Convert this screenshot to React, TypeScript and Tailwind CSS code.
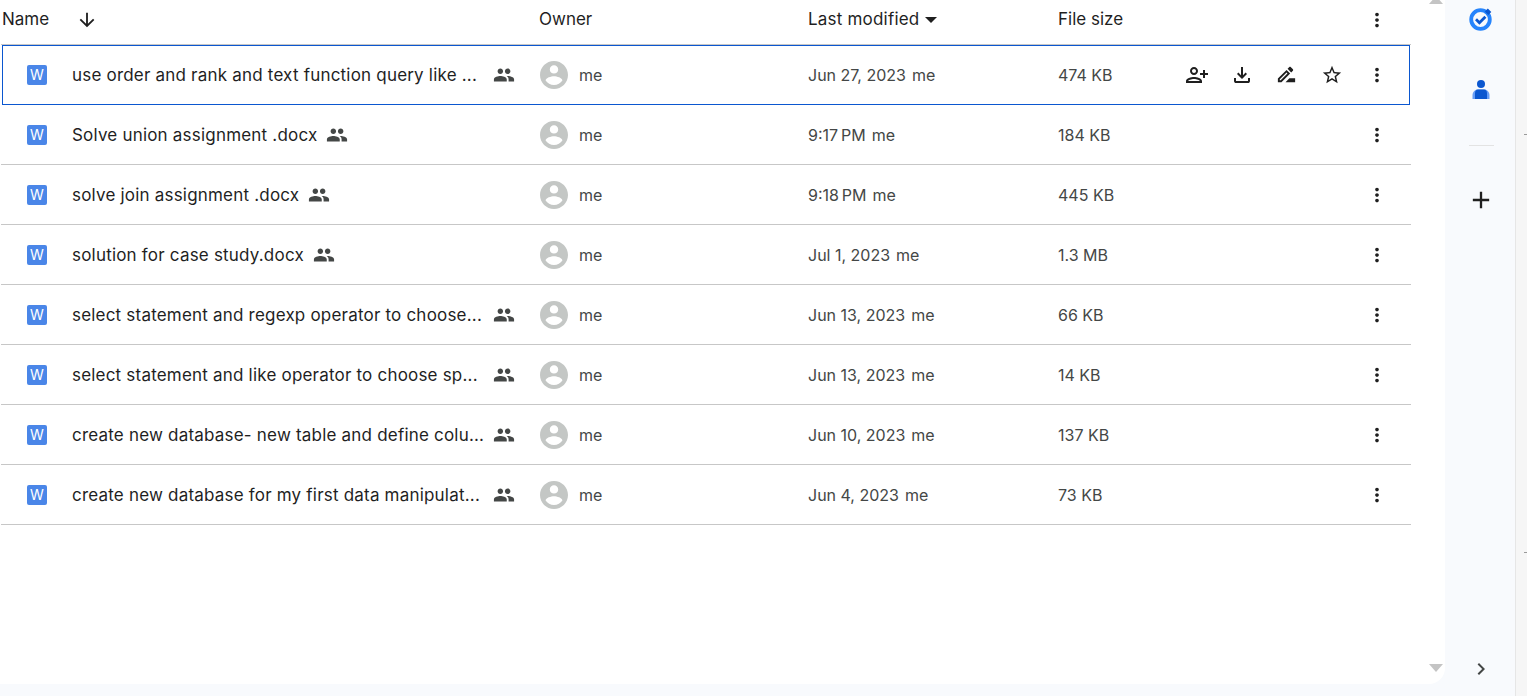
import React from "react";

const files = [
  { name: "use order and rank and text function query like ...", date: "Jun 27, 2023", size: "474 KB", active: true },
  { name: "Solve union assignment .docx", date: "9:17\u202fPM", size: "184 KB" },
  { name: "solve join assignment .docx", date: "9:18\u202fPM", size: "445 KB" },
  { name: "solution for case study.docx", date: "Jul 1, 2023", size: "1.3 MB" },
  { name: "select statement and regexp operator to choose...", date: "Jun 13, 2023", size: "66 KB" },
  { name: "select statement and like operator to choose sp...", date: "Jun 13, 2023", size: "14 KB" },
  { name: "create new database- new table and define colu...", date: "Jun 10, 2023", size: "137 KB" },
  { name: "create new database for my first data manipulat...", date: "Jun 4, 2023", size: "73 KB" },
];

function Icon({ d, className }: { d: string; className?: string }) {
  return (
    <svg viewBox="0 0 24 24" fill="currentColor" className={className}>
      <path d={d} />
    </svg>
  );
}

const moreVert =
  "M12 8c1.1 0 2-.9 2-2s-.9-2-2-2-2 .9-2 2 .9 2 2 2zm0 2c-1.1 0-2 .9-2 2s.9 2 2 2 2-.9 2-2-.9-2-2-2zm0 6c-1.1 0-2 .9-2 2s.9 2 2 2 2-.9 2-2-.9-2-2-2z";
const people =
  "M16 11c1.66 0 2.99-1.34 2.99-3S17.66 5 16 5c-1.66 0-3 1.34-3 3s1.34 3 3 3zm-8 0c1.66 0 2.99-1.34 2.99-3S9.66 5 8 5C6.34 5 5 6.34 5 8s1.34 3 3 3zm0 2c-2.33 0-7 1.17-7 3.5V19h14v-2.5c0-2.33-4.67-3.5-7-3.5zm8 0c-.29 0-.62.02-.97.05 1.16.84 1.97 1.97 1.97 3.45V19h6v-2.5c0-2.33-4.67-3.5-7-3.5z";
const personAdd =
  "M15 12c2.21 0 4-1.79 4-4s-1.79-4-4-4-4 1.79-4 4 1.79 4 4 4zm0-6c1.1 0 2 .9 2 2s-.9 2-2 2-2-.9-2-2 .9-2 2-2zm0 8c-2.67 0-8 1.34-8 4v2h16v-2c0-2.66-5.33-4-8-4zm-6 4c.22-.72 3.31-2 6-2 2.7 0 5.8 1.29 6 2H9zm-3-3v-3h3v-2H6V7H4v3H1v2h3v3h2z";
const download =
  "M12 16l-5-5 1.4-1.45 2.6 2.6V4h2v8.15l2.6-2.6L17 11l-5 5zm-6 4c-.55 0-1.02-.2-1.41-.59C4.2 19.02 4 18.55 4 18v-3h2v3h12v-3h2v3c0 .55-.2 1.02-.59 1.41-.39.39-.86.59-1.41.59H6z";
const rename =
  "M15 16l-4 4h10v-4h-6z M12.06 7.19L3 16.25V20h3.75l9.06-9.06-3.75-3.75z M5.92 18H5v-.92l7.06-7.06.92.92L5.92 18z M18.71 8.04c.39-.39.39-1.02 0-1.41l-2.34-2.34c-.39-.39-1.02-.39-1.41 0l-1.83 1.83 3.75 3.75 1.83-1.83z";
const star =
  "M22 9.24l-7.19-.62L12 2 9.19 8.63 2 9.24l5.46 4.73L5.82 21 12 17.27 18.18 21l-1.63-7.03L22 9.24zM12 15.4l-3.76 2.27 1-4.28-3.32-2.88 4.38-.38L12 6.1l1.71 4.04 4.38.38-3.32 2.88 1 4.28L12 15.4z";

function Avatar() {
  return (
    <svg viewBox="2 2 20 20" fill="#c4c7c5" className="w-7 h-7 shrink-0">
      <path d="M12 2C6.48 2 2 6.48 2 12s4.48 10 10 10 10-4.48 10-10S17.52 2 12 2zm0 3c1.66 0 3 1.34 3 3s-1.34 3-3 3-3-1.34-3-3 1.34-3 3-3zm0 14.2c-2.5 0-4.71-1.28-6-3.22.03-1.99 4-3.08 6-3.08 1.99 0 5.97 1.09 6 3.08-1.29 1.94-3.5 3.22-6 3.22z" />
    </svg>
  );
}

function ActionButton({ children }: { children: React.ReactNode }) {
  return <div className="flex items-center justify-center w-[45px] h-10">{children}</div>;
}

function FileRow({ file }: { file: (typeof files)[number] }) {
  const short = file.name.endsWith(".docx");
  return (
    <div
      className={`relative grid grid-cols-[538px_269px_250px_1fr] items-center h-[60px] border-b ${
        file.active ? "border-transparent" : "border-[#c7c7c7]"
      }`}
    >
      {/* focus ring */}
      {file.active && <div className="absolute left-px right-px top-0 bottom-[-1px] border border-[#0b57d0]" />}

      <div className="flex items-center pl-[26px]">
        <div className="flex items-center justify-center w-5 h-5 rounded-[2px] bg-[#4a86e8] text-white text-[14px] shrink-0">
          W
        </div>
        <span className="ml-[25px] pt-[2px] text-[17px] tracking-[0.2px] text-[#1f1f1f] whitespace-nowrap">
          {file.name}
        </span>
        <Icon
          d={people}
          className={`w-[22px] h-[22px] text-[#444746] shrink-0 ${short ? "ml-[9px]" : "absolute left-[492px]"}`}
        />
      </div>

      <div className="flex items-center gap-[11px] pl-px text-[#444746]">
        <Avatar />
        <span>me</span>
      </div>

      <div className="text-[#444746] whitespace-nowrap">
        {file.date}
        <span className="ml-[6px]">me</span>
      </div>

      <div className="flex items-center justify-between pr-[12px] text-[#444746]">
        <span>{file.size}</span>
        <div className="flex text-[#1f1f1f]">
          {file.active && (
            <>
              <ActionButton>
                <Icon d={personAdd} className="w-6 h-6 -scale-x-100" />
              </ActionButton>
              <ActionButton>
                <Icon d={download} className="w-6 h-6" />
              </ActionButton>
              <ActionButton>
                <Icon d={rename} className="w-[23px] h-[23px]" />
              </ActionButton>
              <ActionButton>
                <Icon d={star} className="w-[22px] h-[22px]" />
              </ActionButton>
            </>
          )}
          <ActionButton>
            <Icon d={moreVert} className="w-[22px] h-[22px]" />
          </ActionButton>
        </div>
      </div>
    </div>
  );
}

export default function App() {
  return (
    <div className="flex w-[1527px] h-[696px] overflow-hidden bg-[#f8fafd] font-['Inter',sans-serif] text-[16px]">
      <div className="flex flex-col w-[1515px]">
        <div className="flex h-[684px]">
          {/* FILE LIST */}
          <main className="relative w-[1445px] bg-white rounded-br-2xl">
            <div className="ml-px w-[1410px]">
              <div className="grid grid-cols-[538px_269px_250px_1fr] items-center h-[45px] pb-[8px] border-b border-[#c7c7c7] text-[#1f1f1f] text-[17px]">
                <div className="flex items-center pl-px">
                  <span className="w-[74px]">Name</span>
                  <Icon d="M20 12l-1.41-1.41L13 16.17V4h-2v12.17l-5.58-5.59L4 12l8 8 8-8z" className="w-[22px] h-[22px]" />
                </div>
                <div>Owner</div>
                <div className="flex items-center tracking-[0.2px]">
                  Last modified
                  <svg viewBox="0 0 12 6" fill="currentColor" className="w-3 h-1.5 ml-[6px]">
                    <path d="M0 0h12L6 6z" />
                  </svg>
                </div>
                <div className="flex items-center justify-between pr-[12px]">
                  <span>File size</span>
                  <ActionButton>
                    <Icon d={moreVert} className="w-[22px] h-[22px]" />
                  </ActionButton>
                </div>
              </div>
              {files.map((file) => (
                <FileRow key={file.name} file={file} />
              ))}
            </div>

            {/* scrollbar arrows */}
            <div className="absolute left-[1429px] -top-[4px] w-0 h-0 border-x-[7px] border-x-transparent border-b-[8px] border-b-[#c4c4c4]" />
            <div className="absolute left-[1429px] top-[664px] w-0 h-0 border-x-[7px] border-x-transparent border-t-[8px] border-t-[#c4c4c4]" />
          </main>

          {/* SIDE PANEL */}
          <aside className="flex flex-col items-center w-[70px] pl-[2px]">
            <svg viewBox="0 0 24 24" className="w-6 h-6 mt-[7px]">
              <circle cx="11.500" cy="12.500" r="9.300" fill="none" stroke="#2684fc" strokeWidth="3.800" />
              <path d="M7 12.300l3.400 3.400 6-6" fill="none" stroke="#0b57d0" strokeWidth="2.800" />
              <path d="M18.800 1.500l3.500 3.500-3 3-3.500-3.500z" fill="#0b57d0" />
            </svg>
            <svg viewBox="0 0 24 24" className="w-6 h-6 mt-[47px]">
              <circle cx="12" cy="6" r="4" fill="#0b57d0" />
              <path d="M3.500 21v-4c0-3 2.500-5.500 5-5.500h7c2.500 0 5 2.500 5 5.500v4z" fill="#669df6" />
              <path d="M6 21v-6c0-2 1.500-3.500 3-3.500h6c1.500 0 3 1.500 3 3.500v6z" fill="#0b57d0" />
            </svg>
            <div className="w-[25px] h-px bg-[#e3e3e3] mt-[43px]" />
            <svg viewBox="0 0 24 24" fill="#1f1f1f" className="w-7 h-7 mt-[40px]">
              <path d="M19 13h-6v6h-2v-6H5v-2h6V5h2v6h6v2z" />
            </svg>
            <svg viewBox="0 0 24 24" fill="#444746" className="w-6 h-6 mt-auto mb-[3px]">
              <path d="M8.590 16.590 13.170 12 8.590 7.410 10 6l6 6-6 6z" />
            </svg>
          </aside>
        </div>
        <div className="h-[12px]" />
      </div>

      {/* WINDOW EDGE */}
      <div className="relative w-[12px] bg-[#f6f6f6] border-l border-[#e6e6e6]">
        <div className="absolute right-0 top-[134px] w-[3px] h-px bg-[#9a9a9a]" />
        <div className="absolute right-0 top-[552px] w-[3px] h-px bg-[#9a9a9a]" />
      </div>
    </div>
  );
}
